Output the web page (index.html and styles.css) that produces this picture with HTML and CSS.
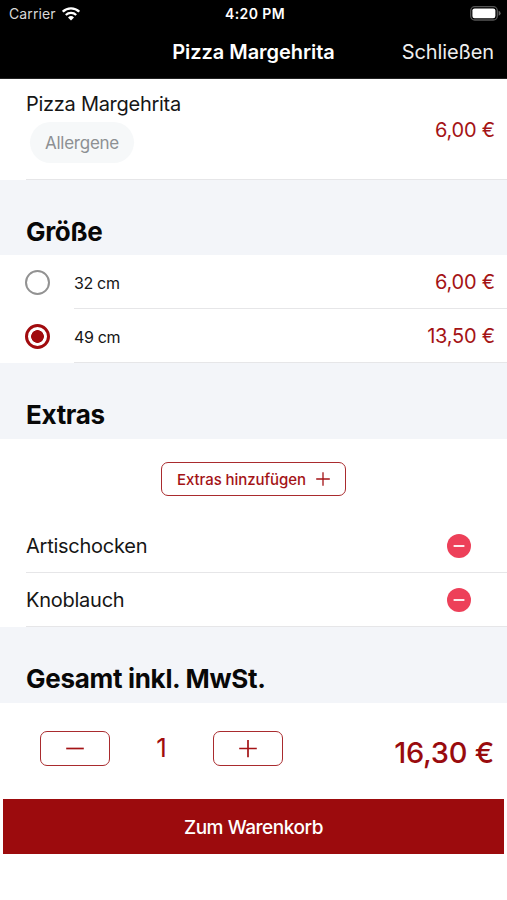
FILE: index.html
```html
<!DOCTYPE html>
<html lang="de">
<head>
<meta charset="utf-8">
<meta name="viewport" content="width=device-width, initial-scale=1">
<title>Pizza Margehrita</title>
<link rel="stylesheet" href="styles.css">
</head>
<body>
<header class="top">
  <div class="status">
    <div class="carrier"><span class="carrier-name">Carrier</span>
      <svg class="wifi" width="18" height="14" viewBox="0 0 18 14" fill="none" stroke="#fff"><path d="M.8 4.7a11.7 11.7 0 0 1 16.4 0" stroke-width="2.3"/><path d="M3.8 8a7.4 7.4 0 0 1 10.4 0" stroke-width="2.2"/><path d="M9 13.5 6 10.4a4.3 4.3 0 0 1 6 0z" fill="#fff" stroke="none"/></svg>
    </div>
    <span class="clock">4:20 PM</span>
    <svg class="battery" width="31" height="15" viewBox="0 0 31 15"><rect x=".7" y=".7" width="26.6" height="13.3" rx="4" fill="none" stroke="#555" stroke-width="1.3"/><rect x="2.4" y="2.4" width="23" height="9.9" rx="2.2" fill="#fff"/><path d="M28.6 4.8q2 .8 2 2.5t-2 2.5z" fill="#666"/></svg>
  </div>
  <nav class="nav"><span></span><h1 class="title">Pizza Margehrita</h1><span class="close">Schließen</span></nav>
</header>
<main>
  <section class="product">
    <div><div class="name">Pizza Margehrita</div><span class="chip">Allergene</span></div>
    <span class="price">6,00 €</span>
  </section>
  <h2 class="heading">Größe</h2>
  <div class="option"><span class="radio"></span><div class="option-body"><span class="size">32 cm</span><span class="price">6,00 €</span></div></div>
  <div class="option"><span class="radio radio-on"></span><div class="option-body"><span class="size">49 cm</span><span class="price">13,50 €</span></div></div>
  <h2 class="heading heading-tall">Extras</h2>
  <div class="add-row"><button class="outline add">Extras hinzufügen
    <svg width="14" height="14" viewBox="0 0 14 14" stroke="currentColor" stroke-width="1.3"><path d="M7 .2v13.6M.2 7h13.6"/></svg></button></div>
  <div class="extra"><span>Artischocken</span><svg width="24" height="24" viewBox="0 0 24 24"><circle cx="12" cy="12" r="12" fill="#ed4059"/><path d="M6.6 12h10.8" stroke="#fff" stroke-width="1.8"/></svg></div>
  <div class="extra"><span>Knoblauch</span><svg width="24" height="24" viewBox="0 0 24 24"><circle cx="12" cy="12" r="12" fill="#ed4059"/><path d="M6.6 12h10.8" stroke="#fff" stroke-width="1.8"/></svg></div>
  <h2 class="heading heading-tall">Gesamt inkl. MwSt.</h2>
  <section class="summary">
    <button class="outline step"><svg width="18" height="18" viewBox="0 0 18 18" stroke="currentColor" stroke-width="1.7"><path d="M.2 8.5h17.6"/></svg></button>
    <span class="count">1</span>
    <button class="outline step"><svg width="18" height="18" viewBox="0 0 18 18" stroke="currentColor" stroke-width="1.7"><path d="M.2 8.5h17.6M9 0v17.3"/></svg></button>
    <span class="total">16,30 €</span>
  </section>
  <button class="cart">Zum Warenkorb</button>
</main>
</body>
</html>
```
FILE: styles.css
```css
* { box-sizing: border-box; }
body { margin: 0; min-height: 900px; background: #fff; color: #161616; font-family: Inter, "Liberation Sans", sans-serif; font-size: 20px; }
button { font: inherit; margin: 0; padding: 0; }
svg { display: block; flex: none; }
.top { height: 79px; background: #000; color: #fff; border-bottom: 1px solid #222; }
.status { height: 27px; display: grid; grid-template-columns: 1fr auto 1fr; align-items: center; padding: 0 6px 0 9px; }
.carrier { display: flex; align-items: center; gap: 6px; font-size: 14px; letter-spacing: .1px; color: #d8d8d8; }
.clock { font-size: 14px; font-weight: 600; letter-spacing: .4px; }
.battery { justify-self: end; }
.nav { height: 50px; display: grid; grid-template-columns: 1fr auto 1fr; align-items: center; padding: 0 13px; }
.title { margin: 0; font-size: 20px; font-weight: 600; line-height: 24px; letter-spacing: -.05px; }
.close { justify-self: end; color: #eee; letter-spacing: -.1px; }
.product { height: 101px; margin-left: 26px; padding: 12px 12px 0 0; display: flex; justify-content: space-between; border-bottom: 1px solid #e6e6e8; }
.name { line-height: 26px; letter-spacing: -.28px; }
.chip { display: block; width: 104px; height: 41px; margin: 5px 0 0 4px; border-radius: 21px; background: #f6f8f9; color: #8d9093; font-size: 17px; line-height: 43px; letter-spacing: -.25px; text-align: center; }
.price { color: #a41316; line-height: 26px; letter-spacing: -.2px; }
.product .price { margin-top: 26px; }
.heading { margin: 0; height: 75px; padding: 36px 26px 0; background: #f3f5f9; color: #080808; font-size: 26px; line-height: 32px; font-weight: 700; letter-spacing: -.3px; }
.heading-tall { height: 76px; }
.option { height: 54px; display: flex; align-items: center; padding-left: 25px; }
.radio { width: 25px; height: 25px; border: 2px solid #929292; border-radius: 50%; flex: none; }
.radio-on { border: 3px solid #a10b0e; background: radial-gradient(circle, #a10b0e 0 6px, transparent 6.7px); }
.option-body { height: 54px; margin-left: 24px; padding-right: 12px; flex: 1; display: flex; align-items: center; justify-content: space-between; border-bottom: 1px solid #e6e6e8; }
.size { padding-top: 3px; font-size: 16px; letter-spacing: -.35px; }
.add-row { height: 80px; display: flex; justify-content: center; align-items: center; }
.outline { display: flex; align-items: center; justify-content: center; background: #fff; border: 1px solid #a92b2e; border-radius: 7px; color: #a41316; }
.add { width: 185px; height: 34px; gap: 10px; font-size: 15px; font-weight: 500; letter-spacing: -.08px; white-space: nowrap; }
.extra { height: 54px; margin-left: 26px; padding-right: 36px; display: flex; align-items: center; justify-content: space-between; border-bottom: 1px solid #e6e6e8; letter-spacing: -.25px; }
.summary { height: 96px; display: flex; align-items: flex-start; padding: 28px 13px 0 40px; }
.step { width: 70px; height: 35px; }
.count { width: 103px; text-align: center; font-size: 26px; line-height: 34px; color: #a10b0e; }
.total { margin-left: auto; font-size: 29px; font-weight: 500; line-height: 43px; letter-spacing: -.25px; color: #990b0e; }
.cart { display: block; width: calc(100% - 6px); height: 55px; margin: 0 3px; padding-top: 2px; border: 0; background: #9c0b0d; color: #fff; font-size: 19px; font-weight: 500; letter-spacing: -.45px; }
```
